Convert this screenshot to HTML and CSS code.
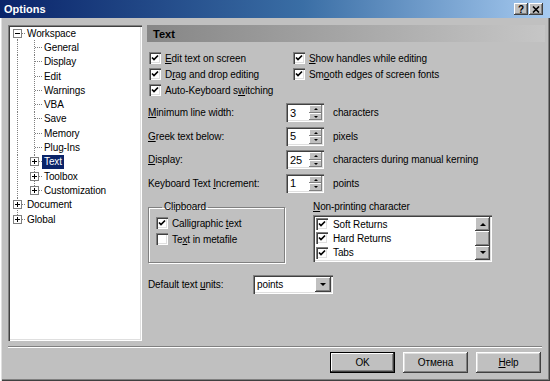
FILE: index.html
```html
<!DOCTYPE html>
<html lang="en">
<head>
    <meta charset="UTF-8">
    <title>Options</title>
    <link rel="stylesheet" href="styles.css">
</head>
<body>
    <div class="window">
        <div class="titlebar">
            <span class="title">Options</span>
            <div class="title-buttons">
                <span class="tbtn">?</span>
                <span class="tbtn">
                    <svg width="8" height="7" viewBox="0 0 8 7"><path d="M1 0.5 L7 6.5 M7 0.5 L1 6.5" stroke="#000" stroke-width="1.6" fill="none"/></svg>
                </span>
            </div>
        </div>

        <div class="body">
            <div class="tree">
                <div class="row"><span class="c first"><i class="box minus"></i></span><span class="lbl">Workspace</span></div>
                <div class="row"><span class="c pipe"></span><span class="c tee"></span><span class="lbl">General</span></div>
                <div class="row"><span class="c pipe"></span><span class="c tee"></span><span class="lbl">Display</span></div>
                <div class="row"><span class="c pipe"></span><span class="c tee"></span><span class="lbl">Edit</span></div>
                <div class="row"><span class="c pipe"></span><span class="c tee"></span><span class="lbl">Warnings</span></div>
                <div class="row"><span class="c pipe"></span><span class="c tee"></span><span class="lbl">VBA</span></div>
                <div class="row"><span class="c pipe"></span><span class="c tee"></span><span class="lbl">Save</span></div>
                <div class="row"><span class="c pipe"></span><span class="c tee"></span><span class="lbl">Memory</span></div>
                <div class="row"><span class="c pipe"></span><span class="c tee"></span><span class="lbl">Plug-Ins</span></div>
                <div class="row"><span class="c pipe"></span><span class="c tee"><i class="box plus"></i></span><span class="lbl selected">Text</span></div>
                <div class="row"><span class="c pipe"></span><span class="c tee"><i class="box plus"></i></span><span class="lbl">Toolbox</span></div>
                <div class="row"><span class="c pipe"></span><span class="c elbow"><i class="box plus"></i></span><span class="lbl">Customization</span></div>
                <div class="row"><span class="c tee"><i class="box plus"></i></span><span class="lbl">Document</span></div>
                <div class="row"><span class="c elbow"><i class="box plus"></i></span><span class="lbl">Global</span></div>
            </div>

            <div class="page">
                <div class="page-head">Text</div>

                <div class="checks">
                    <label class="check"><span class="cb on"></span><span><u>E</u>dit text on screen</span></label>
                    <label class="check"><span class="cb on"></span><span><u>S</u>how handles while editing</span></label>
                    <label class="check"><span class="cb on"></span><span>D<u>r</u>ag and drop editing</span></label>
                    <label class="check"><span class="cb on"></span><span>Sm<u>o</u>oth edges of screen fonts</span></label>
                    <label class="check"><span class="cb on"></span><span>Auto-Keyboard s<u>w</u>itching</span></label>
                </div>

                <div class="spins">
                    <div class="spin-row">
                        <span class="spin-label"><u>M</u>inimum line width:</span>
                        <div class="spin"><span class="spin-val">3</span><span class="spin-btns"><span class="sbtn"><i class="tri-up"></i></span><span class="sbtn"><i class="tri-down"></i></span></span></div>
                        <span class="spin-unit">characters</span>
                    </div>
                    <div class="spin-row">
                        <span class="spin-label"><u>G</u>reek text below:</span>
                        <div class="spin"><span class="spin-val">5</span><span class="spin-btns"><span class="sbtn"><i class="tri-up"></i></span><span class="sbtn"><i class="tri-down"></i></span></span></div>
                        <span class="spin-unit">pixels</span>
                    </div>
                    <div class="spin-row">
                        <span class="spin-label"><u>D</u>isplay:</span>
                        <div class="spin"><span class="spin-val">25</span><span class="spin-btns"><span class="sbtn"><i class="tri-up"></i></span><span class="sbtn"><i class="tri-down"></i></span></span></div>
                        <span class="spin-unit">characters during manual kerning</span>
                    </div>
                    <div class="spin-row">
                        <span class="spin-label">Keyboard Text <u>I</u>ncrement:</span>
                        <div class="spin"><span class="spin-val">1</span><span class="spin-btns"><span class="sbtn"><i class="tri-up"></i></span><span class="sbtn"><i class="tri-down"></i></span></span></div>
                        <span class="spin-unit">points</span>
                    </div>
                </div>

                <div class="groups">
                    <fieldset class="clip">
                        <legend>Clipboard</legend>
                        <label class="check"><span class="cb on"></span><span>Calligraphic <u>t</u>ext</span></label>
                        <label class="check"><span class="cb"></span><span>Te<u>x</u>t in metafile</span></label>
                    </fieldset>

                    <div class="nonprint">
                        <span class="np-label"><u>N</u>on-printing character</span>
                        <div class="listbox">
                            <div class="list-items">
                                <label class="list-item"><span class="cb on"></span><span>Soft Returns</span></label>
                                <label class="list-item"><span class="cb on"></span><span>Hard Returns</span></label>
                                <label class="list-item"><span class="cb on"></span><span>Tabs</span></label>
                            </div>
                            <div class="scrollbar">
                                <span class="sbtn"><i class="tri-up big"></i></span>
                                <span class="sbtn"></span>
                                <span class="sbtn"><i class="tri-down big"></i></span>
                            </div>
                        </div>
                    </div>
                </div>

                <div class="units">
                    <span class="units-label">Default text <u>u</u>nits:</span>
                    <div class="combo">
                        <span class="combo-val">points</span>
                        <span class="sbtn combo-btn"><i class="tri-down big"></i></span>
                    </div>
                </div>
            </div>
        </div>

        <div class="separator"></div>

        <div class="buttons">
            <button class="btn btn-default">OK</button>
            <button class="btn">Отмена</button>
            <button class="btn"><u>H</u>elp</button>
        </div>
    </div>
</body>
</html>
```

FILE: styles.css
```css
body {
    margin: 0;
    padding: 0;
    font-family: "Liberation Sans", Arial, sans-serif;
    font-size: 10px;
    letter-spacing: -0.1px;
    color: #000;
}

.window {
    width: 550px;
    height: 381px;
    box-sizing: border-box;
    display: flex;
    flex-direction: column;
    background-color: #c0c0c0;
    box-shadow: inset 1px 0 #fff, inset 2px 0 #dfdfdf, inset -1px -1px #404040, inset -2px -2px #808080;
}

.titlebar {
    height: 18px;
    flex: none;
    display: flex;
    align-items: center;
    justify-content: space-between;
    padding: 0 7px 0 4px;
    background: linear-gradient(to right, #0a246a, #3a6ea5 55%, #a6caf0);
}

.title {
    color: white;
    font-weight: bold;
    font-size: 11px;
    letter-spacing: 0;
}

.title-buttons {
    display: flex;
    gap: 1px;
}

.tbtn {
    width: 14px;
    height: 12px;
    display: flex;
    align-items: center;
    justify-content: center;
    background-color: #c0c0c0;
    font-weight: bold;
    font-size: 10px;
    box-shadow: inset -1px -1px #404040, inset 1px 1px #fff, inset -2px -2px #808080;
}

.body {
    display: flex;
    gap: 5px;
    padding: 7px 5px 0 8px;
}

/* tree */

.tree {
    --vdot: repeating-linear-gradient(to bottom, #808080 0 1px, transparent 1px 2px);
    --hdot: repeating-linear-gradient(to right, #808080 0 1px, transparent 1px 2px);
    width: 134px;
    height: 316px;
    box-sizing: border-box;
    padding: 1px 0 0 1px;
    background-color: white;
    box-shadow: inset 1px 1px #808080, inset 2px 2px #404040, inset -1px -1px #fff, inset -2px -2px #dfdfdf;
}

.row {
    display: flex;
    height: 14.3px;
    white-space: nowrap;
}

.c {
    width: 17px;
    flex: none;
    display: flex;
    align-items: center;
    justify-content: center;
}

.pipe {
    background: var(--vdot) 8px 0 / 1px 100% no-repeat;
}

.tee {
    background: var(--hdot) 9px 50% / 8px 1px no-repeat, var(--vdot) 8px 0 / 1px 100% no-repeat;
}

.elbow {
    background: var(--hdot) 9px 50% / 8px 1px no-repeat, var(--vdot) 8px 0 / 1px 50% no-repeat;
}

.first {
    background: var(--hdot) 9px 50% / 8px 1px no-repeat, var(--vdot) 8px 100% / 1px 50% no-repeat;
}

.box {
    width: 9px;
    height: 9px;
    box-sizing: border-box;
    border: 1px solid #808080;
    margin-left: -1px;
}

.minus {
    background: linear-gradient(#000, #000) center / 5px 1px no-repeat, white;
}

.plus {
    background: linear-gradient(#000, #000) center / 5px 1px no-repeat,
                linear-gradient(#000, #000) center / 1px 5px no-repeat, white;
}

.lbl {
    display: flex;
    align-items: center;
    padding: 0 2px 0 1px;
}

.selected {
    background-color: #0a246a;
    color: white;
    padding: 0 2px;
    margin-left: -1px;
}

/* page */

.page {
    width: 398px;
    height: 316px;
    display: flex;
    flex-direction: column;
}

.page-head {
    height: 17px;
    display: flex;
    align-items: center;
    padding-left: 6px;
    font-weight: bold;
    font-size: 11px;
    letter-spacing: 0;
    background: linear-gradient(to right, #868686, #c6c6c6);
}

.checks {
    display: grid;
    grid-template-columns: 144px 1fr;
    grid-auto-rows: 16px;
    margin: 8px 0 0 2px;
}

.check {
    display: flex;
    align-items: center;
    gap: 4px;
}

.cb {
    width: 12px;
    height: 12px;
    flex: none;
    box-sizing: border-box;
    background-color: white;
    box-shadow: inset 1px 1px #808080, inset 2px 2px #404040, inset -1px -1px #fff, inset -2px -2px #dfdfdf;
}

.cb.on {
    background: white url("data:image/svg+xml;utf8,<svg xmlns='http://www.w3.org/2000/svg' width='12' height='12'><path d='M3 5.5 L5 7.5 L9 3.5' fill='none' stroke='black' stroke-width='1.7'/></svg>") no-repeat;
}

.spins {
    margin-top: 3px;
}

.spin-row {
    display: flex;
    align-items: center;
    height: 23.5px;
    padding-left: 1px;
}

.spin-label {
    width: 138px;
    flex: none;
}

.spin {
    width: 38px;
    height: 19px;
    box-sizing: border-box;
    display: flex;
    padding: 2px;
    background-color: white;
    box-shadow: inset 1px 1px #808080, inset 2px 2px #404040, inset -1px -1px #fff, inset -2px -2px #dfdfdf;
}

.spin-val {
    flex: 1;
    display: flex;
    align-items: center;
    padding-left: 2px;
    font-size: 11px;
}

.spin-btns {
    width: 13px;
    display: flex;
    flex-direction: column;
}

.sbtn {
    flex: 1;
    display: flex;
    align-items: center;
    justify-content: center;
    background-color: #c0c0c0;
    box-shadow: inset -1px -1px #404040, inset 1px 1px #fff, inset -2px -2px #808080;
}

.spin-btns .sbtn {
    box-shadow: inset -1px -1px #808080, inset 1px 1px #fff;
}

.tri-up {
    width: 0;
    height: 0;
    border-left: 2px solid transparent;
    border-right: 2px solid transparent;
    border-bottom: 2px solid #000;
}

.tri-down {
    width: 0;
    height: 0;
    border-left: 2px solid transparent;
    border-right: 2px solid transparent;
    border-top: 2px solid #000;
}

.tri-up.big {
    border-left-width: 3px;
    border-right-width: 3px;
    border-bottom-width: 3px;
}

.tri-down.big {
    border-left-width: 3px;
    border-right-width: 3px;
    border-top-width: 3px;
}

.spin-unit {
    margin-left: 9px;
    white-space: nowrap;
}

.groups {
    display: flex;
    margin-top: 6px;
}

.clip {
    width: 137px;
    height: 62px;
    min-width: 0;
    box-sizing: border-box;
    margin: 0 0 0 1px;
    padding: 2px 0 0 7px;
    border: 1px solid #808080;
    box-shadow: inset 1px 1px #fff, 1px 1px #fff;
}

.clip legend {
    padding: 0 2px;
    margin-left: 6px;
    line-height: 12px;
}

.clip .check {
    height: 16px;
}

.nonprint {
    margin-left: 28px;
    display: flex;
    flex-direction: column;
}

.np-label {
    line-height: 12px;
}

.listbox {
    width: 179px;
    height: 47px;
    margin-top: 2px;
    box-sizing: border-box;
    display: flex;
    padding: 2px;
    background-color: white;
    box-shadow: inset 1px 1px #808080, inset 2px 2px #404040, inset -1px -1px #fff, inset -2px -2px #dfdfdf;
}

.list-items {
    flex: 1;
    padding-left: 1px;
}

.list-item {
    display: flex;
    align-items: center;
    gap: 5px;
    height: 14.3px;
}

.scrollbar {
    width: 15px;
    display: flex;
    flex-direction: column;
}

.units {
    display: flex;
    align-items: center;
    margin-top: 12px;
    height: 19px;
}

.units-label {
    width: 105px;
    padding-left: 1px;
}

.combo {
    width: 80px;
    height: 19px;
    box-sizing: border-box;
    display: flex;
    padding: 2px;
    background-color: white;
    box-shadow: inset 1px 1px #808080, inset 2px 2px #404040, inset -1px -1px #fff, inset -2px -2px #dfdfdf;
}

.combo-val {
    flex: 1;
    display: flex;
    align-items: center;
    padding-left: 2px;
}

.combo-btn {
    flex: none;
    width: 16px;
}

.separator {
    margin: 5px 8px 0 8px;
    border-top: 1px solid #808080;
    border-bottom: 1px solid #fff;
}

.buttons {
    display: flex;
    justify-content: flex-end;
    gap: 8px;
    margin-top: 4px;
    padding-right: 9px;
}

.btn {
    width: 65px;
    height: 21px;
    padding: 0;
    border: none;
    font-family: inherit;
    font-size: 10px;
    letter-spacing: -0.1px;
    color: #000;
    background-color: #c0c0c0;
    box-shadow: inset -1px -1px #404040, inset 1px 1px #fff, inset -2px -2px #808080, inset 2px 2px #dfdfdf;
}

.btn-default {
    box-shadow: inset 0 0 0 1px #000, inset -2px -2px #404040, inset 2px 2px #fff, inset -3px -3px #808080;
}
```
